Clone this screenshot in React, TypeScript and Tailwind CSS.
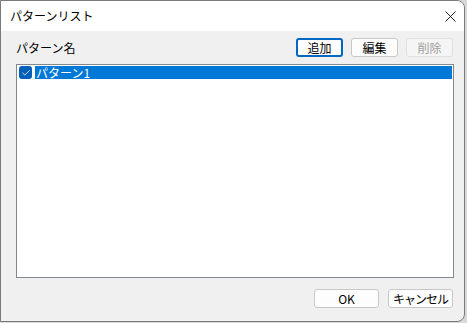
import { Check, X } from "lucide-react";

const font = { fontFamily: '"Noto Sans CJK JP", "Noto Sans", sans-serif' };

function Btn({ label, focused, disabled, w = "w-[47px]", tight }: { label: string; focused?: boolean; disabled?: boolean; w?: string; tight?: boolean }) {
  const cls = focused
    ? "border-2 border-[#0067c0] text-black bg-white"
    : disabled
    ? "border border-[#e0e0e0] text-[#a0a0a0] bg-[#f5f5f5]"
    : "border border-[#c8c8c8] text-black bg-[#fdfdfd]";
  return (
    <div className={`${w} h-[19px] rounded-[3px] flex items-center justify-center text-[12px] leading-none ${tight ? "tracking-[-1px]" : ""} ${cls}`}>
      {label}
    </div>
  );
}

export default function App() {
  return (
    <div className="w-[467px] h-[323px] bg-[#d8d8d8] overflow-hidden" style={font}>
      <div className="w-[465px] h-[322px] flex flex-col bg-[#f0f0f0] border border-[#7a7a7a] rounded-tr-[8px] rounded-br-[8px] overflow-hidden">
        <div className="h-[30px] bg-white flex items-center justify-between pl-[9px] pr-[4px] shrink-0">
          <span className="text-[12px] text-black">パターンリスト</span>
          <X className="w-[19px] h-[19px] text-black" strokeWidth={1.1} />
        </div>
        <div className="flex-1 flex flex-col pl-[15px] pr-[10px] pt-[7px]">
          <div className="flex items-center justify-between h-[19px] pr-[1px]">
            <span className="text-[12px] text-black">パターン名</span>
            <div className="flex gap-[8px]">
              <Btn label="追加" focused />
              <Btn label="編集" />
              <Btn label="削除" disabled />
            </div>
          </div>
          <div className="mt-[7px] h-[214px] bg-white border border-[#828790] p-[1px]">
            <div className="flex items-center h-[13px]">
              <div className="w-[13px] h-[13px] ml-[1px] rounded-[3px] bg-[#005fb8] flex items-center justify-center">
                <Check className="w-[10px] h-[10px] text-white" strokeWidth={2} />
              </div>
              <div className="ml-[3px] flex-1 h-[13px] bg-[#0078d7] text-white text-[12px] leading-[13px] pl-[1px]">
                パターン1
              </div>
            </div>
          </div>
          <div className="flex justify-end gap-[9px] mt-[11px] pr-[1px]">
            <Btn label="OK" w="w-[65px]" />
            <Btn label="キャンセル" w="w-[65px]" tight />
          </div>
        </div>
      </div>
    </div>
  );
}
